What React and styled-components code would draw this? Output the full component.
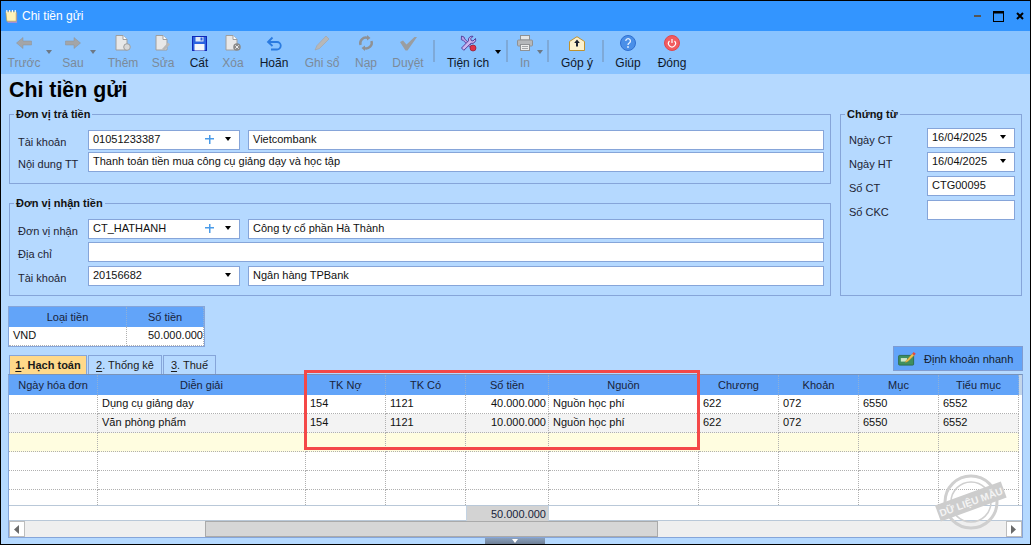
import React from 'react'
import styled, { createGlobalStyle } from 'styled-components'

const Global = createGlobalStyle`
  html, body { margin: 0; padding: 0; }
  body {
    width: 1031px;
    height: 545px;
    overflow: hidden;
    font-family: "Liberation Sans", Arial, sans-serif;
    font-size: 11px;
    color: #111;
  }
  * { box-sizing: border-box; }
`

const Window = styled.div`
  width: 1031px;
  height: 545px;
  border: 1px solid #000;
  background: #b5d9ff;
  display: flex;
  flex-direction: column;
`

const TitleBar = styled.header`
  height: 30px;
  flex: none;
  background: #3395ff;
  display: flex;
  align-items: center;
  padding: 0 7px 0 3px;
  color: #fff;
`

const TitleText = styled.span`
  margin-left: 3px;
  font-size: 12px;
  flex: 1;
`

const WinButtons = styled.div`
  display: flex;
  align-items: center;
  gap: 12px;
  margin-right: -1px;
`

const Toolbar = styled.nav`
  height: 43px;
  flex: none;
  background: #89c3ff;
  display: flex;
  padding-left: 1px;
`

const ToolItem = styled.div`
  position: relative;
  width: ${p => p.$w}px;
  flex: none;
  display: flex;
  flex-direction: column;
  align-items: center;
  padding-top: 4px;
  color: ${p => (p.$off ? '#7c8a99' : '#10182a')};
`

const ToolIcon = styled.div`
  height: 16px;
  display: flex;
  align-items: center;
  justify-content: center;
`

const ToolLabel = styled.span`
  margin-top: 4px;
  font-size: 12px;
  line-height: 16px;
  white-space: nowrap;
`

const Caret = styled.i`
  position: absolute;
  top: 19px;
  right: ${p => p.$r}px;
  width: 0;
  height: 0;
  border-left: 3.5px solid transparent;
  border-right: 3.5px solid transparent;
  border-top: 4px solid ${p => (p.$off ? '#6d7885' : '#000')};
`

const ToolSep = styled.div`
  width: 2px;
  height: 22px;
  flex: none;
  margin: 9px ${p => p.$r}px 0 ${p => p.$l}px;
  background: #7ea9d8;
`

const Body = styled.main`
  flex: 1;
  display: flex;
  flex-direction: column;
  padding: 0 7px 0 7px;
  position: relative;
`

const Heading = styled.h1`
  margin: 3px 0 0 1px;
  height: 30px;
  font-family: "Liberation Sans", Arial, sans-serif;
  font-size: 21.33px;
  line-height: 26px;
  font-weight: 700;
  color: #000;
`

const TopArea = styled.div`
  display: flex;
  gap: 9px;
  padding-left: 1px;
`

const LeftGroups = styled.div`
  width: 822px;
  display: flex;
  flex-direction: column;
  gap: 12px;
`

const Group = styled.fieldset`
  margin: 0;
  height: ${p => p.$h}px;
  padding: ${p => p.$pt || 8}px 6px 0 8px;
  border: 1px solid #86a5d9;
  min-inline-size: 0;
  display: flex;
  flex-direction: column;
  gap: ${p => p.$gap || 2}px;
`

const Legend = styled.legend`
  padding: 0 2px;
  margin-left: -4px;
  font-size: 11px;
  line-height: 15px;
  font-weight: 700;
  color: #111;
`

const FormRow = styled.div`
  display: flex;
  align-items: center;
  height: 20px;
  margin-top: ${p => p.$mt || 0}px;
`

const FieldLabel = styled.label`
  width: ${p => p.$w || 70}px;
  flex: none;
  padding-top: 3px;
  color: #1d2433;
`

const Field = styled.div`
  position: relative;
  width: ${p => (p.$w ? `${p.$w}px` : 'auto')};
  flex: ${p => (p.$w ? 'none' : 1)};
  margin-left: ${p => p.$ml || 0}px;
  height: 20px;
  background: #fff;
  border: 1px solid #86a5d9;
  padding: 0 4px 2px;
  display: flex;
  align-items: center;
  white-space: nowrap;
  color: #111;
`

const FieldText = styled.span`
  flex: 1;
`

const Plus = styled.span`
  width: 9px;
  height: 9px;
  margin-right: 11px;
  display: block;
  background:
    linear-gradient(#4a9be8, #4a9be8) center / 9px 1.5px no-repeat,
    linear-gradient(#4a9be8, #4a9be8) center / 1.5px 9px no-repeat;
`

const FieldCaret = styled.i`
  width: 0;
  height: 0;
  margin-right: 4px;
  border-left: 3.5px solid transparent;
  border-right: 3.5px solid transparent;
  border-top: 4px solid #000;
`

const DocGroup = styled(Group)`
  width: 182px;
`

const Grid = styled.div`
  display: grid;
  grid-template-columns: ${p => p.$cols};
  background: #fff;
`

const HeadCell = styled.div`
  height: 20px;
  background: ${p => (p.$blank ? '#c4d6ea' : '#62a4f9')};
  display: flex;
  align-items: center;
  justify-content: center;
  color: #18233a;
  border-right: ${p => (p.$blank ? '0' : '1px dotted #8eb0d8')};
  white-space: nowrap;
`

const Cell = styled.div`
  height: 19px;
  padding: 0 ${p => (p.$right ? p.$pr ?? 2 : 4)}px 2px 4px;
  display: flex;
  align-items: center;
  justify-content: ${p => (p.$right ? 'flex-end' : 'flex-start')};
  background: ${p => p.$bg || '#fff'};
  border-right: 1px dotted #b0b0b0;
  border-bottom: 1px dotted #b0b0b0;
  white-space: nowrap;
  color: #111;
`

const BlankCell = styled.div`
  height: 19px;
`

const CurrencyTable = styled(Grid)`
  width: 197px;
  margin: 10px 0 0 0;
  border: 1px solid #86a5d9;
`

const TabRow = styled.div`
  height: 27px;
  display: flex;
  align-items: flex-end;
  justify-content: space-between;
`

const Tabs = styled.div`
  display: flex;
  margin-left: 1px;
  gap: 1px;
`

const Tab = styled.div`
  height: 19px;
  width: ${p => p.$w}px;
  border: 1px solid #86a5d9;
  border-bottom: 0;
  display: flex;
  align-items: center;
  justify-content: center;
  background: ${p => (p.$active ? '#ffd98a' : '#b5d9ff')};
  font-weight: ${p => (p.$active ? 700 : 400)};
  color: #1a1a1a;
  white-space: nowrap;

  u { text-underline-offset: 2px; }
`

const QuickButton = styled.button`
  width: 130px;
  height: 25px;
  margin-bottom: 3px;
  border: 1px solid #7f9cd2;
  background: #62a4f9;
  padding: 0 0 0 4px;
  display: flex;
  align-items: center;
  gap: 8px;
  font: inherit;
  white-space: nowrap;
  color: #141c2c;
`

const MainGrid = styled.section`
  position: relative;
  width: 1015px;
  height: 164px;
  flex: none;
  background: #fff;
  border: 1px solid #86a5d9;
  border-top-color: #7a93b8;
  display: flex;
  flex-direction: column;
`

const Spacer = styled.div`
  height: ${p => p.$h}px;
  border-right: 1px dotted #b0b0b0;
`

const FootRow = styled(Grid)`
  height: 16px;
  border-top: 1px solid #b9c8d8;
  border-bottom: 1px solid #b9c8d8;
`

const SumCell = styled.div`
  grid-column: ${p => p.$col};
  height: 15px;
  background: #d3d3d3;
  border-left: 1px solid #c3d3e3;
  border-right: 1px solid #c3d3e3;
  display: flex;
  align-items: center;
  justify-content: flex-end;
  padding-right: 2px;
  color: #18233a;
`

const ScrollBar = styled.div`
  flex: 1;
  background: #efefef;
  display: flex;
`

const ScrollButton = styled.div`
  width: 16px;
  background: #fff;
  border: 1px solid #bdbdbd;
  display: flex;
  align-items: center;
  justify-content: center;
`

const ScrollGap = styled.div`
  width: ${p => p.$w}px;
  flex: ${p => (p.$w ? 'none' : 1)};
`

const ScrollThumb = styled.div`
  width: 453px;
  background: #d6d6d6;
  border: 1px solid #aaaaaa;
`

const Highlight = styled.div`
  position: absolute;
  left: 295px;
  top: -5px;
  width: 396px;
  height: 80px;
  border: 3px solid #f44848;
  pointer-events: none;
`

const Stamp = styled.svg`
  position: absolute;
  right: 15px;
  bottom: 5px;
  pointer-events: none;
`

const Splitter = styled.div`
  position: absolute;
  left: 484px;
  bottom: 0;
  width: 60px;
  height: 6px;
  background: linear-gradient(#8aa0bd, #6f7f96);
  display: flex;
  justify-content: center;
  padding-top: 1px;
`

const SplitterArrow = styled.i`
  width: 0;
  height: 0;
  border-left: 3px solid transparent;
  border-right: 3px solid transparent;
  border-top: 4px solid #fff;
`

const GRAY = '#a3a5a8'

const ArrowIcon = ({ flip }) => (
  <svg width="16" height="12" viewBox="0 0 16 12" style={flip ? { transform: 'scaleX(-1)' } : undefined}>
    <path d="M.5 6 7 .5V4h8.500v4H7v3.500z" fill={GRAY} stroke="#8f9194" strokeWidth="0.5" />
  </svg>
)

const DocBase = ({ children }) => (
  <svg width="16" height="16" viewBox="0 0 16 16">
    <path d="M1 .5h7L12 4.500V15H1z" fill="#e8e8e8" stroke="#9e9e9e" />
    <path d="M8 .5v4h4" fill="#fff" stroke="#9e9e9e" />
    {children}
  </svg>
)

const SaveIcon = () => (
  <svg width="15" height="15" viewBox="0 0 15 15">
    <rect x="0.500" y="0.500" width="14" height="14" fill="#2a62e0" stroke="#0f27b8" />
    <rect x="3.500" y="1" width="8" height="4.500" fill="#dfe8f5" />
    <rect x="8.500" y="1.500" width="2" height="3" fill="#2a62e0" />
    <rect x="2.500" y="8" width="10" height="6.500" fill="#f4f6fa" />
  </svg>
)

const UndoIcon = () => (
  <svg width="16" height="15" viewBox="0 0 16 15" fill="none" stroke="#2b7be0" strokeWidth="1.800">
    <path d="M3 6h8a3.500 3.500 0 0 1 0 7.500H5" />
    <path d="M6.500 1.500 2 6l4.500 4" />
  </svg>
)

const PencilIcon = () => (
  <svg width="16" height="16" viewBox="0 0 16 16">
    <path d="M3 10.500 12 1l3 3-9.500 9.500L1 15z" fill="#b7b7b7" stroke="#a2a2a2" strokeWidth="0.600" />
  </svg>
)

const ReloadIcon = () => (
  <svg width="16" height="16" viewBox="0 0 16 16" fill="none" stroke="#8f9194" strokeWidth="2.400">
    <path d="M2.500 10a5.700 5.700 0 0 1 7-7.200" />
    <path d="M13.500 6a5.700 5.700 0 0 1-7 7.200" />
    <path d="M9 0l3.500 3L9 5.500zM7 16l-3.500-3L7 10.500z" fill="#8f9194" stroke="none" />
  </svg>
)

const CheckIcon = () => (
  <svg width="18" height="15" viewBox="0 0 18 15">
    <path d="M1 6l3-1.500 3.500 4L15.500 1H18L8.500 14.500h-2z" fill="#9a9da0" />
  </svg>
)

const ToolsIcon = () => (
  <svg width="17" height="17" viewBox="0 0 17 17">
    <path d="M1.500 1 4 2l.8 2 9 9-1.500 1.500-9-9-2-.8z" fill="#b9a2e8" stroke="#4a2f8f" strokeWidth="0.800" />
    <path d="M15.500 3.500 13 6l-1.800-.5L10.700 3.700 13 1.300a3.700 3.700 0 0 0-4.500 4.500L1.500 13l2.300 2.300L11 8.300a3.700 3.700 0 0 0 4.500-4.800z" fill="#cbb6f0" stroke="#4a2f8f" strokeWidth="0.900" />
    <circle cx="13" cy="13" r="3" fill="#e0304a" stroke="#8f1c30" strokeWidth="0.700" />
  </svg>
)

const PrintIcon = () => (
  <svg width="16" height="16" viewBox="0 0 16 16">
    <rect x="3.500" y="0.500" width="9" height="4.500" fill="#e6e6e6" stroke="#8f9194" />
    <rect x="0.500" y="5" width="15" height="6" rx="1" fill="#b5b7ba" stroke="#8f9194" />
    <rect x="3.500" y="9.500" width="9" height="6" fill="#ececec" stroke="#8f9194" />
    <path d="M5 11.500h6M5 13.500h6" stroke="#a3a5a8" />
  </svg>
)

const MailIcon = () => (
  <svg width="16" height="15" viewBox="0 0 16 15">
    <path d="M.5 5.500 8 .7l7.500 4.800v9H.5z" fill="#fdf1cd" stroke="#c0922e" />
    <path d="M8 3.500 10.800 7H9v3.500H7V7H5.200z" fill="#1c2030" />
  </svg>
)

const HelpIcon = () => (
  <svg width="16" height="16" viewBox="0 0 16 16">
    <circle cx="8" cy="8" r="7.500" fill="#4a8fe8" stroke="#2f6fd0" />
    <path d="M5.800 6a2.300 2.300 0 1 1 3.500 2c-.8.500-1.300.8-1.300 1.900" fill="none" stroke="#e8f2ff" strokeWidth="1.300" />
    <circle cx="8" cy="12" r="0.900" fill="#e8f2ff" />
  </svg>
)

const PowerIcon = () => (
  <svg width="16" height="16" viewBox="0 0 16 16">
    <circle cx="8" cy="8" r="7.500" fill="#f15b60" stroke="#e0474c" />
    <path d="M5.500 6a3.500 3.500 0 1 0 5 0M8 4v4" fill="none" stroke="#fff" strokeWidth="1.200" />
  </svg>
)

const AppIcon = () => (
  <svg width="15" height="15" viewBox="0 0 16 16">
    <path d="M2 4h12v11H4z" fill="#9b8fe0" />
    <path d="M2 3h11v10H3z" fill="#fff3b8" stroke="#b9a24a" strokeWidth="0.700" />
    <path d="M3 1v3M6 1v3M9 1v3M12 1v3" stroke="#fff" strokeWidth="1.200" />
  </svg>
)

const QuickIcon = () => (
  <svg width="18" height="15" viewBox="0 0 20 17">
    <rect x="0.500" y="5" width="17" height="11" rx="1" fill="#3f8f5f" stroke="#2c6b45" />
    <rect x="3" y="8" width="7" height="4" fill="#cfe6c8" />
    <path d="M9 11 16 3l2 2-7 7-3 1z" fill="#f1c04a" stroke="#a9802a" strokeWidth="0.500" />
    <path d="M16 3l1.500-2L20 3l-2 2z" fill="#e8453c" />
  </svg>
)

const tools = [
  { label: 'Trước', w: 44, off: true, icon: <ArrowIcon />, caret: -6 },
  { label: 'Sau', w: 54, off: true, icon: <ArrowIcon flip />, caret: 4 },
  { label: 'Thêm', w: 46, off: true, icon: <DocBase><circle cx="12" cy="12" r="3.300" fill="#d8d8d8" stroke="#9e9e9e" /></DocBase> },
  { label: 'Sửa', w: 34, off: true, icon: <DocBase><path d="M7 14l6-6.500 2 2L9 15.500z" fill="#b8b8b8" /></DocBase> },
  { label: 'Cất', w: 38, icon: <SaveIcon /> },
  { label: 'Xóa', w: 30, off: true, icon: <DocBase><circle cx="12" cy="12" r="3.800" fill="#8b8b8b" /><path d="M10.300 10.300l3.400 3.400M13.700 10.300l-3.400 3.400" stroke="#eee" /></DocBase> },
  { label: 'Hoãn', w: 52, icon: <UndoIcon /> },
  { label: 'Ghi sổ', w: 44, off: true, icon: <PencilIcon /> },
  { label: 'Nạp', w: 44, off: true, icon: <ReloadIcon /> },
  { label: 'Duyệt', w: 40, off: true, icon: <CheckIcon /> },
  { sep: [5, 0] },
  { label: 'Tiện ích', w: 66, icon: <ToolsIcon />, caret: 0 },
  { sep: [5, 0] },
  { label: 'In', w: 34, off: true, icon: <PrintIcon />, caret: -1 },
  { sep: [5, 3] },
  { label: 'Góp ý', w: 50, icon: <MailIcon /> },
  { sep: [0, 4] },
  { label: 'Giúp', w: 40, icon: <HelpIcon /> },
  { label: 'Đóng', w: 48, icon: <PowerIcon /> },
]

const mainCols = '89px 208px 80px 80px 83px 150px 80px 80px 80px 80px 1fr'
const mainHead = ['Ngày hóa đơn', 'Diễn giải', 'TK Nợ', 'TK Có', 'Số tiền', 'Nguồn', 'Chương', 'Khoản', 'Mục', 'Tiểu mục']

const line = (desc, amount) => ['', desc, '154', '1121', amount, 'Nguồn học phí', '622', '072', '6550', '6552']
const empty = Array(10).fill('')
const rows = [
  { bg: '#fff', cells: line('Dụng cụ giảng dạy', '40.000.000') },
  { bg: '#f3f3f3', cells: line('Văn phòng phẩm', '10.000.000') },
  { bg: '#fffde0', cells: empty },
  { bg: '#fff', cells: empty },
  { bg: '#fff', cells: empty },
]

export default function App() {
  return (
    <>
      <Global />
      <Window>
        <TitleBar>
          <AppIcon />
          <TitleText>Chi tiền gửi</TitleText>
          <WinButtons>
            <svg width="7" height="2" viewBox="0 0 7 2"><rect width="7" height="2" fill="#555" /></svg>
            <svg width="11" height="11" viewBox="0 0 11 11"><rect x="0.500" y="0.500" width="10" height="10" fill="none" stroke="#000" /><rect width="11" height="2.500" /></svg>
            <svg width="8" height="8" viewBox="0 0 8 8"><path d="M1 1l6 6M7 1 1 7" stroke="#000" strokeWidth="2" /></svg>
          </WinButtons>
        </TitleBar>

        <Toolbar>
          {tools.map((t, i) =>
            t.sep ? (
              <ToolSep key={i} $l={t.sep[0]} $r={t.sep[1]} />
            ) : (
              <ToolItem key={t.label} $w={t.w} $off={t.off}>
                <ToolIcon>{t.icon}</ToolIcon>
                <ToolLabel>{t.label}</ToolLabel>
                {t.caret !== undefined && <Caret $r={t.caret} $off={t.off} />}
              </ToolItem>
            )
          )}
        </Toolbar>

        <Body>
          <Heading>Chi tiền gửi</Heading>
          <TopArea>
            <LeftGroups>
              <Group $h={77}>
                <Legend>Đơn vị trả tiền</Legend>
                <FormRow>
                  <FieldLabel>Tài khoản</FieldLabel>
                  <Field $w={152}><FieldText>01051233387</FieldText><Plus /><FieldCaret /></Field>
                  <Field $ml={8}>Vietcombank</Field>
                </FormRow>
                <FormRow>
                  <FieldLabel>Nội dung TT</FieldLabel>
                  <Field>Thanh toán tiền mua công cụ giảng dạy và học tập</Field>
                </FormRow>
              </Group>
              <Group $h={100} $gap={3}>
                <Legend>Đơn vị nhận tiền</Legend>
                <FormRow>
                  <FieldLabel>Đơn vị nhận</FieldLabel>
                  <Field $w={152}><FieldText>CT_HATHANH</FieldText><Plus /><FieldCaret /></Field>
                  <Field $ml={8}>Công ty cổ phần Hà Thành</Field>
                </FormRow>
                <FormRow>
                  <FieldLabel>Địa chỉ</FieldLabel>
                  <Field />
                </FormRow>
                <FormRow $mt={1}>
                  <FieldLabel>Tài khoản</FieldLabel>
                  <Field $w={152}><FieldText>20156682</FieldText><FieldCaret /></Field>
                  <Field $ml={8}>Ngân hàng TPBank</Field>
                </FormRow>
              </Group>
            </LeftGroups>
            <DocGroup $h={189} $gap={4} $pt={6}>
              <Legend>Chứng từ</Legend>
              <FormRow>
                <FieldLabel $w={78}>Ngày CT</FieldLabel>
                <Field $w={88}><FieldText>16/04/2025</FieldText><FieldCaret /></Field>
              </FormRow>
              <FormRow>
                <FieldLabel $w={78}>Ngày HT</FieldLabel>
                <Field $w={88}><FieldText>16/04/2025</FieldText><FieldCaret /></Field>
              </FormRow>
              <FormRow>
                <FieldLabel $w={78}>Số CT</FieldLabel>
                <Field $w={88}>CTG00095</Field>
              </FormRow>
              <FormRow>
                <FieldLabel $w={78}>Số CKC</FieldLabel>
                <Field $w={88} />
              </FormRow>
            </DocGroup>
          </TopArea>

          <CurrencyTable $cols="118px 77px">
            <HeadCell>Loại tiền</HeadCell>
            <HeadCell>Số tiền</HeadCell>
            <Cell>VND</Cell>
            <Cell $right $pr={0}>50.000.000</Cell>
          </CurrencyTable>

          <TabRow>
            <Tabs>
              <Tab $w={78} $active><u>1</u>. Hạch toán</Tab>
              <Tab $w={74}><u>2</u>. Thống kê</Tab>
              <Tab $w={53}><u>3</u>. Thuế</Tab>
            </Tabs>
            <QuickButton><QuickIcon />Định khoản nhanh</QuickButton>
          </TabRow>

          <MainGrid>
            <Grid $cols={mainCols}>
              {mainHead.map((h, i) => <HeadCell key={i}>{h}</HeadCell>)}
              <HeadCell $blank />
              {rows.map((r, ri) => (
                <React.Fragment key={ri}>
                  {r.cells.map((c, ci) => (
                    <Cell key={ci} $bg={r.bg} $right={ci === 4}>{c}</Cell>
                  ))}
                  <BlankCell />
                </React.Fragment>
              ))}
              {empty.map((_, i) => <Spacer key={i} $h={15} />)}
            </Grid>
            <FootRow $cols={mainCols}>
              <SumCell $col="5">50.000.000</SumCell>
            </FootRow>
            <ScrollBar>
              <ScrollButton>
                <svg width="6" height="9" viewBox="0 0 6 9"><path d="M5 0v9L0 4.500z" fill="#6a6a6a" /></svg>
              </ScrollButton>
              <ScrollGap $w={180} />
              <ScrollThumb />
              <ScrollGap />
              <ScrollButton>
                <svg width="6" height="9" viewBox="0 0 6 9"><path d="M0 0v9l5-4.500z" fill="#6a6a6a" /></svg>
              </ScrollButton>
            </ScrollBar>
            <Highlight />
            <Stamp width="72" height="60" viewBox="0 0 72 60">
              <g fill="none" stroke="#cfcfcf">
                <circle cx="36" cy="30" r="26" strokeWidth="3" />
                <circle cx="36" cy="30" r="20" strokeWidth="1.500" />
              </g>
              <g transform="rotate(-20 36 30)">
                <rect x="1" y="21" width="70" height="17" fill="#cdcdcd" />
                <text x="36" y="33.500" textAnchor="middle" fontFamily="'Liberation Sans', sans-serif" fontSize="10" fontWeight="700" fill="#f4f4f4">DỮ LIỆU MẪU</text>
              </g>
            </Stamp>
          </MainGrid>
          <Splitter><SplitterArrow /></Splitter>
        </Body>
      </Window>
    </>
  )
}
